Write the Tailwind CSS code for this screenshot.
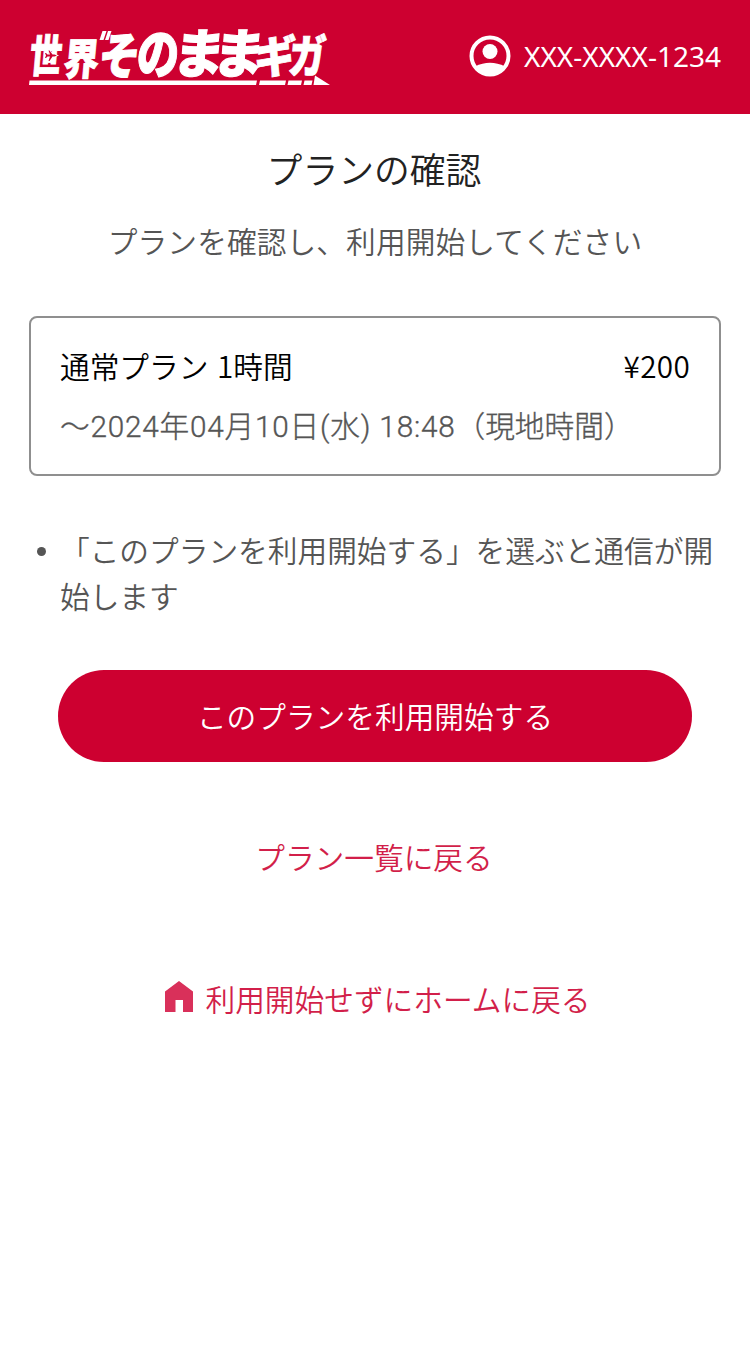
<!DOCTYPE html>
<html lang="ja">
<head>
  <meta charset="UTF-8" />
  <meta name="viewport" content="width=device-width, initial-scale=1.0" />
  <title>プランの確認</title>
  <script src="https://cdn.jsdelivr.net/npm/@tailwindcss/browser@4"></script>
</head>
<body class="bg-white min-h-screen font-['Noto_Sans_CJK_JP',sans-serif] font-[350] text-[29.7px] text-[#555]">

  <!-- Header -->
  <header class="flex items-center justify-between h-[114px] bg-[#cd0030] pl-5 pr-7 text-white">
    <svg class="w-[320px] h-[100px] mt-[26px] overflow-visible" viewBox="20 20 320 100" fill="#fff" stroke="#fff" font-family="'Noto Sans CJK JP', sans-serif" font-weight="900" font-size="40">
      <g stroke-width="0.8">
        <text transform="matrix(.8 0 -.1 1.12 28.500 72)">世</text>
        <text transform="matrix(.88 0 -.1 1.08 62.500 75)">界</text>
        <text transform="matrix(1.04 0 -.14 1.25 97 73.500)">そ</text>
        <text transform="matrix(1.06 0 -.1 1.36 135.500 74)">の</text>
        <text transform="matrix(1.3 0 -.12 1.32 171.500 72.500)">ま</text>
        <text transform="matrix(1.3 0 -.12 1.32 211.500 72.500)">ま</text>
        <text transform="matrix(1.02 0 -.1 1.12 253 72.500)">ギ</text>
        <text transform="matrix(.92 0 -.1 1.15 287.500 72.500)">ガ</text>
      </g>
      <g stroke="none">
        <path d="M102.500 31h4l-3 9h-4zM108 31h3.500l-3 9h-3.500z" />
        <!-- Underline -->
        <path d="M29.500 80.500H257l-1 4.500H29zM260 80.500h26l-1 4.500h-26zM288.500 80.500h13.500l-1 4.500h-13.500zM304.500 80.500h8l-1 4.500h-8zM315 75.500L330 85h-16.500z" />
        <!-- Plane -->
        <path fill="#cd0030" stroke="#fff" stroke-width="1.500" paint-order="stroke" d="M57 55.500L54.500 54.500H52.500L49.500 50.500H48.500L50 54.500H47.500L46 53H45L46 55.500L45 58H46L47.500 56.500H50L48.500 61H49.500L52.500 56.500H54.500z" />
      </g>
    </svg>
    <div class="flex items-center mb-0.5">
      <svg class="w-[42px] h-[42px] mr-[13px]" viewBox="0 0 42 42">
        <clipPath id="avatar"><circle cx="21" cy="21" r="19" /></clipPath>
        <circle cx="21" cy="21" r="18.500" fill="none" stroke="#fff" stroke-width="4" />
        <circle cx="21" cy="16.500" r="7.500" fill="#fff" />
        <path clip-path="url(#avatar)" d="M6 31.500Q21 24 36 31.500L36 42H6z" fill="#fff" />
      </svg>
      <span class="mr-px font-['Noto_Sans',sans-serif] font-normal text-[28px] leading-none">XXX-XXXX-1234</span>
    </div>
  </header>

  <main class="px-[29px]">
    <h1 class="mt-[30px] pr-0.5 text-center text-[35.8px] leading-[48px] text-[#222]">プランの確認</h1>
    <p class="mt-[25px] text-center leading-[48px] tracking-[0.1px]">プランを確認し、利用開始してください</p>

    <!-- Plan -->
    <section class="mt-[51px] h-[160px] rounded-lg border-2 border-[#8f8f8f] px-[29px] pt-6">
      <div class="flex justify-between leading-[48px] text-black">
        <span class="[word-spacing:2px]">通常プラン 1時間</span>
        <span class="tracking-[0.3px]">¥200</span>
      </div>
      <p class="mt-[13px] leading-[48px] whitespace-nowrap font-[Roboto,'Noto_Sans_CJK_JP',sans-serif] font-light [-webkit-text-stroke:0.35px]"><span class="tracking-[0.8px]">～2024年04月10日(水) 18:48</span>（現地時間）</p>
    </section>

    <ul class="mt-[51px] leading-[46px]">
      <li class="flex">
        <span class="shrink-0 w-[9px] h-[9px] mt-5 ml-2 mr-[14px] rounded-full bg-[#555]"></span>
        <p class="w-[655px]">「このプランを利用開始する」を選ぶと通信が開始します</p>
      </li>
    </ul>

    <button class="block mx-auto mt-[51px] w-[634px] h-[92px] rounded-full bg-[#cd0030] text-white">このプランを利用開始する</button>

    <a href="#" class="block mt-[71px] pr-0.5 text-center leading-[48px] text-[#d21f4a]">プラン一覧に戻る</a>

    <a href="#" class="flex justify-center items-center mt-[94px] pl-1.5 leading-[48px] text-[#d21f4a]">
      <svg class="w-7 h-[31px] mr-3 mb-1.5" viewBox="0 0 28 31" fill="#d9305a"><path d="M14 0L28 10.500V31H18V19H10.500V31H0V10.500z" /></svg>
      利用開始せずにホームに戻る
    </a>
  </main>

</body>
</html>
